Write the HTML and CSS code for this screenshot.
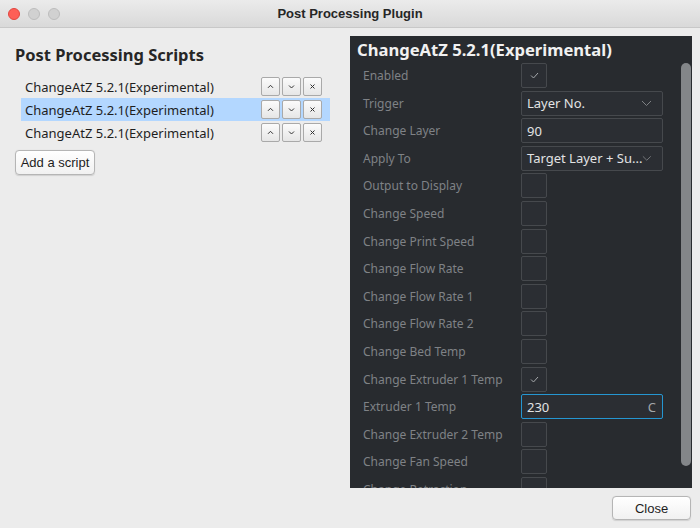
FILE: index.html
```html
<!DOCTYPE html>
<html>
<head>
<meta charset="utf-8">
<link rel="stylesheet" href="styles.css">
</head>
<body>
<div class="window">
  <div class="titlebar">
    <div class="lights">
      <span class="light red"></span>
      <span class="light gray"></span>
      <span class="light gray"></span>
    </div>
    <div class="wtitle">Post Processing Plugin</div>
  </div>
  <div class="main">
    <div class="left">
      <h1 class="heading">Post Processing Scripts</h1>
      <div class="list">
        <div class="item">
          <span class="name">ChangeAtZ 5.2.1(Experimental)</span>
          <div class="tools">
            <button class="tb"><svg width="9" height="9" viewBox="0 0 9 9"><path d="M2 5.8 L4.5 3.3 L7 5.8" fill="none" stroke="#333" stroke-width="1"/></svg></button>
            <button class="tb"><svg width="9" height="9" viewBox="0 0 9 9"><path d="M2 3.5 L4.5 6 L7 3.5" fill="none" stroke="#333" stroke-width="1"/></svg></button>
            <button class="tb"><svg width="9" height="9" viewBox="0 0 9 9"><path d="M2.5 2.5 L6.5 6.5 M6.5 2.5 L2.5 6.5" fill="none" stroke="#333" stroke-width="1"/></svg></button>
          </div>
        </div>
        <div class="item selected">
          <span class="name">ChangeAtZ 5.2.1(Experimental)</span>
          <div class="tools">
            <button class="tb"><svg width="9" height="9" viewBox="0 0 9 9"><path d="M2 5.8 L4.5 3.3 L7 5.8" fill="none" stroke="#333" stroke-width="1"/></svg></button>
            <button class="tb"><svg width="9" height="9" viewBox="0 0 9 9"><path d="M2 3.5 L4.5 6 L7 3.5" fill="none" stroke="#333" stroke-width="1"/></svg></button>
            <button class="tb"><svg width="9" height="9" viewBox="0 0 9 9"><path d="M2.5 2.5 L6.5 6.5 M6.5 2.5 L2.5 6.5" fill="none" stroke="#333" stroke-width="1"/></svg></button>
          </div>
        </div>
        <div class="item">
          <span class="name">ChangeAtZ 5.2.1(Experimental)</span>
          <div class="tools">
            <button class="tb"><svg width="9" height="9" viewBox="0 0 9 9"><path d="M2 5.8 L4.5 3.3 L7 5.8" fill="none" stroke="#333" stroke-width="1"/></svg></button>
            <button class="tb"><svg width="9" height="9" viewBox="0 0 9 9"><path d="M2 3.5 L4.5 6 L7 3.5" fill="none" stroke="#333" stroke-width="1"/></svg></button>
            <button class="tb"><svg width="9" height="9" viewBox="0 0 9 9"><path d="M2.5 2.5 L6.5 6.5 M6.5 2.5 L2.5 6.5" fill="none" stroke="#333" stroke-width="1"/></svg></button>
          </div>
        </div>
      </div>
      <button class="mac-btn add">Add a script</button>
    </div>
    <div class="panel">
      <div class="scroll">
        <h2 class="ptitle">ChangeAtZ 5.2.1(Experimental)</h2>
        <div class="form">
          <span class="lbl">Enabled</span>
          <span class="check"><svg width="9" height="7" viewBox="0 0 9 7"><path d="M1 3.5 L3.5 6 L8 1" fill="none" stroke="#a5a8ab" stroke-width="1"/></svg></span>

          <span class="lbl">Trigger</span>
          <span class="field select">Layer No.<svg class="chev" width="11" height="7" viewBox="0 0 11 7"><path d="M1 1 L5.5 5.5 L10 1" fill="none" stroke="#7e8184" stroke-width="1"/></svg></span>

          <span class="lbl">Change Layer</span>
          <span class="field">90</span>

          <span class="lbl">Apply To</span>
          <span class="field select">Target Layer + Su...<svg class="chev" width="11" height="7" viewBox="0 0 11 7"><path d="M1 1 L5.5 5.5 L10 1" fill="none" stroke="#7e8184" stroke-width="1"/></svg></span>

          <span class="lbl">Output to Display</span>
          <span class="check"></span>

          <span class="lbl">Change Speed</span>
          <span class="check"></span>

          <span class="lbl">Change Print Speed</span>
          <span class="check"></span>

          <span class="lbl">Change Flow Rate</span>
          <span class="check"></span>

          <span class="lbl">Change Flow Rate 1</span>
          <span class="check"></span>

          <span class="lbl">Change Flow Rate 2</span>
          <span class="check"></span>

          <span class="lbl">Change Bed Temp</span>
          <span class="check"></span>

          <span class="lbl">Change Extruder 1 Temp</span>
          <span class="check"><svg width="9" height="7" viewBox="0 0 9 7"><path d="M1 3.5 L3.5 6 L8 1" fill="none" stroke="#a5a8ab" stroke-width="1"/></svg></span>

          <span class="lbl">Extruder 1 Temp</span>
          <span class="field focus">230<span class="unit">C</span></span>

          <span class="lbl">Change Extruder 2 Temp</span>
          <span class="check"></span>

          <span class="lbl">Change Fan Speed</span>
          <span class="check"></span>

          <span class="lbl">Change Retraction</span>
          <span class="check"></span>
        </div>
      </div>
      <div class="scrollbar"></div>
    </div>
  </div>
  <div class="footer">
    <button class="mac-btn close">Close</button>
  </div>
</div>
</body>
</html>
```

FILE: styles.css
```css
html, body {
  margin: 0;
  padding: 0;
}
body {
  width: 700px;
  height: 528px;
  overflow: hidden;
  background: #ececec;
  font-family: "Noto Sans", sans-serif;
}
.window {
  width: 700px;
  height: 528px;
  display: flex;
  flex-direction: column;
  background: #ececec;
}
.titlebar {
  height: 27px;
  flex: none;
  border-bottom: 1px solid #c8c8c8;
  background: linear-gradient(#ebebeb, #d9d9d9);
  display: flex;
  align-items: center;
  position: relative;
}
.lights {
  display: flex;
  gap: 8px;
  padding-left: 8px;
}
.light {
  width: 12px;
  height: 12px;
  border-radius: 50%;
  box-sizing: border-box;
}
.light.red {
  background: #fe5f57;
  border: 0.5px solid #e2463f;
}
.light.gray {
  background: #d1d1d1;
  border: 0.5px solid #bdbdbd;
}
.wtitle {
  position: absolute;
  left: 0;
  right: 0;
  text-align: center;
  font-family: "Liberation Sans", Arial, sans-serif;
  font-weight: bold;
  font-size: 13px;
  color: #262626;
}
.main {
  flex: 1;
  display: flex;
  min-height: 0;
}
.left {
  width: 350px;
  flex: none;
  box-sizing: border-box;
  padding: 13px 20px 0 15px;
}
.heading {
  margin: 0;
  font-size: 16.5px;
  font-weight: bold;
  color: #262626;
  line-height: 27px;
}
.list {
  margin-top: 7px;
  margin-left: 6px;
  display: flex;
  flex-direction: column;
}
.item {
  height: 23px;
  display: flex;
  align-items: center;
  justify-content: space-between;
  padding-left: 4px;
  padding-right: 8px;
}
.item.selected {
  background: #b3d7ff;
}
.name {
  font-size: 13px;
  color: #1e1e1e;
}
.tools {
  display: flex;
  gap: 1px;
}
.tb {
  width: 19px;
  height: 19px;
  padding: 0;
  margin: 0;
  box-sizing: border-box;
  border: 1px solid #a9a9a9;
  border-radius: 2px;
  background: linear-gradient(#fbfbfb, #e6e6e6);
  display: flex;
  align-items: center;
  justify-content: center;
}
.tb + .tb {
  margin-left: 1px;
}
.mac-btn {
  font-family: "Liberation Sans", Arial, sans-serif;
  font-size: 13px;
  color: #1d1d1d;
  background: linear-gradient(#ffffff, #f1f1f1);
  border: 1px solid #b5b5b5;
  border-radius: 4px;
  box-shadow: 0 0.5px 1px rgba(0,0,0,0.12);
  padding: 0;
  box-sizing: border-box;
}
.add {
  margin-top: 6px;
  width: 80px;
  height: 25px;
}
.panel {
  margin-top: 8px;
  width: 342px;
  height: 452px;
  background: #282b2f;
  position: relative;
  overflow: hidden;
}
.scroll {
  height: 100%;
  overflow: hidden;
}
.ptitle {
  margin: 0;
  padding-left: 7px;
  font-size: 16.6px;
  font-weight: bold;
  color: #f1f1f1;
  line-height: 27px;
}
.form {
  display: grid;
  grid-template-columns: 158px 142px;
  grid-auto-rows: 25px;
  row-gap: 2.6px;
  padding-left: 13px;
  align-items: center;
}
.lbl {
  font-size: 12px;
  color: #7f8286;
  white-space: nowrap;
}
.check {
  width: 26px;
  height: 25px;
  box-sizing: border-box;
  border: 1px solid #46494d;
  border-radius: 2px;
  background: #2b2e33;
  display: flex;
  align-items: center;
  justify-content: center;
}
.field {
  height: 25px;
  box-sizing: border-box;
  border: 1px solid #46494d;
  border-radius: 2px;
  background: #2b2e33;
  color: #e2e3e4;
  font-size: 13px;
  white-space: nowrap;
  display: flex;
  align-items: center;
  padding-left: 5px;
  padding-right: 10px;
  position: relative;
}
.select .chev {
  margin-left: auto;
}
.field.focus {
  border-color: #2596d1;
}
.unit {
  margin-left: auto;
  color: #a3a6a9;
  margin-right: -4px;
}
.scrollbar {
  position: absolute;
  right: 1px;
  top: 27px;
  width: 10px;
  height: 403px;
  border-radius: 5px;
  background: #838689;
}
.footer {
  height: 40px;
  flex: none;
  display: flex;
  justify-content: flex-end;
  align-items: flex-start;
  padding-right: 9px;
}
.close {
  margin-top: 8px;
  width: 79px;
  height: 24px;
}
```
